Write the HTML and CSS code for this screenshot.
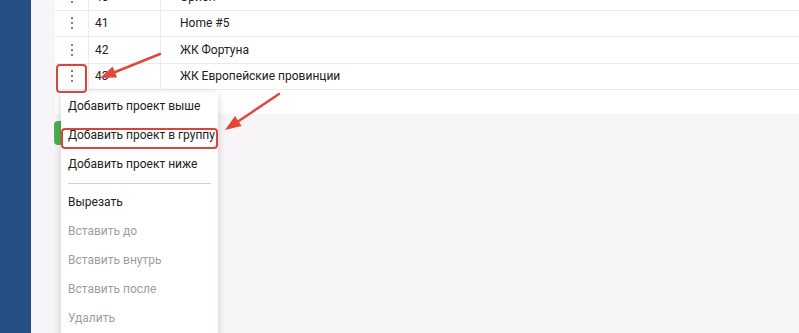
FILE: index.html
```html
<!DOCTYPE html>
<html lang="ru">
<head>
    <meta charset="UTF-8" />
    <title>Проекты</title>
    <link rel="stylesheet" href="styles.css">
</head>
<body>

<div class="sidebar"></div>

<div class="main">
    <div class="grid">
        <div class="row">
            <div class="cell kebab"><span></span><span></span><span></span></div>
            <div class="cell num">40</div>
            <div class="cell name">Орион</div>
        </div>
        <div class="row">
            <div class="cell kebab"><span></span><span></span><span></span></div>
            <div class="cell num">41</div>
            <div class="cell name">Home #5</div>
        </div>
        <div class="row">
            <div class="cell kebab"><span></span><span></span><span></span></div>
            <div class="cell num">42</div>
            <div class="cell name">ЖК Фортуна</div>
        </div>
        <div class="row">
            <div class="cell kebab"><span></span><span></span><span></span></div>
            <div class="cell num">43</div>
            <div class="cell name">ЖК Европейские провинции</div>
        </div>
        <div class="footer"></div>
    </div>
    <button class="add-btn"></button>
</div>

<!-- контекстное меню строки -->
<div class="menu">
    <div class="item">Добавить проект выше</div>
    <div class="item">Добавить проект в группу</div>
    <div class="item">Добавить проект ниже</div>
    <div class="divider"></div>
    <div class="item">Вырезать</div>
    <div class="item disabled">Вставить до</div>
    <div class="item disabled">Вставить внутрь</div>
    <div class="item disabled">Вставить после</div>
    <div class="item disabled">Удалить</div>
</div>

<!-- пометки поверх скриншота -->
<div class="mark mark-kebab"></div>
<div class="mark mark-item"></div>

<svg class="arrows" width="799" height="333" viewBox="0 0 799 333">
    <line x1="160" y1="54" x2="114" y2="72.5" stroke="#e0483b" stroke-width="2.5" stroke-linecap="round"/>
    <polygon points="100,78 117.1,77.6 112.6,66.5" fill="#e0483b"/>
    <line x1="279" y1="94" x2="238" y2="121.5" stroke="#e0483b" stroke-width="2.5" stroke-linecap="round"/>
    <polygon points="225,130 241.6,126.1 235,116.1" fill="#e0483b"/>
</svg>

</body>
</html>
```

FILE: styles.css
```css
body {
    margin: 0;
    width: 799px;
    height: 333px;
    overflow: hidden;
    display: flex;
    font-family: Roboto, "Liberation Sans", sans-serif;
    font-size: 12px;
    color: #212121;
}
.sidebar {
    width: 31px;
    background: #264f86;
}
.main {
    flex: 1;
    background: #f7f5f7;
    padding-left: 24px;
}
.grid {
    background: #fff;
    margin-top: -16px;
}
.row {
    display: grid;
    grid-template-columns: 34px 72px 1fr;
    height: 26.5px;
    box-sizing: border-box;
    border-bottom: 1px solid #ebebeb;
}
.cell {
    display: flex;
    align-items: center;
    border-right: 1px solid #ebebeb;
}
.cell.name {
    border-right: none;
    padding-left: 19px;
}
.cell.num {
    padding-left: 6px;
}
.kebab {
    flex-direction: column;
    justify-content: center;
    gap: 3px;
}
.kebab span {
    width: 2px;
    height: 2px;
    border-radius: 50%;
    background: #555;
}
.footer {
    height: 24px;
}
.add-btn {
    display: block;
    margin: 7px 0 0 -1px;
    width: 90px;
    height: 24px;
    border: none;
    border-radius: 4px;
    background: #4caf50;
}
.menu {
    position: absolute;
    left: 61px;
    top: 92px;
    width: 157px;
    height: 260px;
    background: #fff;
    box-shadow: 0 2px 8px rgba(0, 0, 0, 0.18);
}
.item {
    height: 29px;
    line-height: 29px;
    padding-left: 7px;
    white-space: nowrap;
}
.item.disabled {
    color: #9e9e9e;
}
.divider {
    height: 1px;
    margin: 4px 7px;
    background: #d0d0d0;
}
.mark {
    position: absolute;
    box-sizing: border-box;
    border: 2px solid #d8453b;
    border-radius: 4px;
}
.mark-kebab {
    left: 56px;
    top: 64px;
    width: 31px;
    height: 29px;
}
.mark-item {
    left: 61px;
    top: 128px;
    width: 157px;
    height: 21px;
}
.arrows {
    position: absolute;
    left: 0;
    top: 0;
    pointer-events: none;
}
```
